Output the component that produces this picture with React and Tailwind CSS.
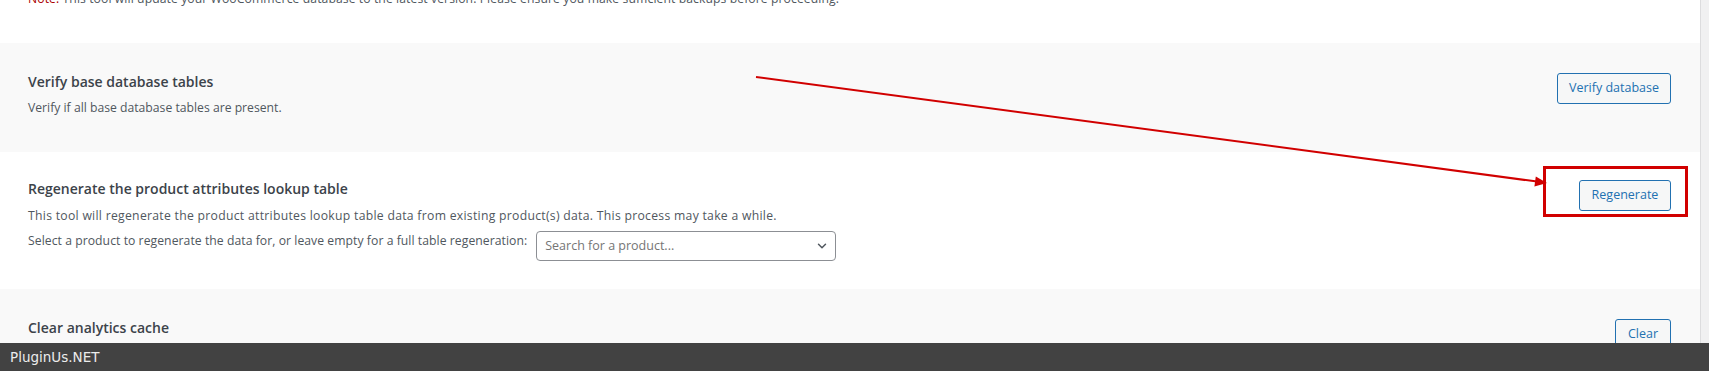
import { ChevronDown } from "lucide-react";

const ToolButton = ({ label, width }) => (
  <button
    type="button"
    className={`${width} h-[31px] shrink-0 rounded-[3px] border border-[#2271b1] bg-[#f6f7f7] text-[12.5px] text-[#2271b1] leading-none`}
  >
    {label}
  </button>
);

const App = () => {
  return (
    <div className="flex h-[371px] w-full flex-col overflow-hidden bg-white font-['Open_Sans',sans-serif]">
      <div className="relative flex min-h-0 flex-1">
        <div className="min-w-0 flex-1 overflow-hidden">
          {/* note line, mostly scrolled out of view */}
          <p className="-mt-[11px] px-[28px] text-[12.2px] leading-5 tracking-[0.08px] text-[#50575e]">
            <span className="text-[#aa0000]">Note:</span> This tool will update
            your WooCommerce database to the latest version. Please ensure you
            make sufficient backups before proceeding.
          </p>

          {/* Verify base database tables */}
          <div className="mt-[34px] flex items-start justify-between bg-[#f9f9f9] pb-[34px] pl-[28px] pr-[29px] pt-[29px]">
            <div>
              <h3 className="text-[14px] font-semibold leading-5 text-[#3c434a]">
                Verify base database tables
              </h3>
              <p className="mt-[6px] text-[12.2px] leading-5 text-[#50575e]">
                Verify if all base database tables are present.
              </p>
            </div>
            <div className="mt-px">
              <ToolButton label="Verify database" width="w-[114px]" />
            </div>
          </div>

          {/* Regenerate lookup table */}
          <div className="flex items-start justify-between bg-white pb-[28px] pl-[28px] pr-[29px] pt-[27px]">
            <div>
              <h3 className="text-[14px] font-semibold leading-5 text-[#3c434a]">
                Regenerate the product attributes lookup table
              </h3>
              <p className="mt-[7px] text-[12.2px] leading-5 tracking-[0.29px] text-[#50575e]">
                This tool will regenerate the product attributes lookup table
                data from existing product(s) data. This process may take a
                while.
              </p>
              <div className="mt-[5px] flex items-start gap-[9px]">
                <span className="text-[12.2px] leading-5 tracking-[0.05px] text-[#50575e]">
                  Select a product to regenerate the data for, or leave empty
                  for a full table regeneration:
                </span>
                <div className="flex h-[30px] w-[300px] items-center justify-between rounded-[4px] border border-[#8c8f94] bg-white pl-[8px] pr-[6px]">
                  <span className="text-[12.5px] text-[#757575]">
                    Search for a product...
                  </span>
                  <ChevronDown size={14} strokeWidth={2.5} className="text-[#50575e]" />
                </div>
              </div>
            </div>
            <div className="mt-px">
              <ToolButton label="Regenerate" width="w-[92px]" />
            </div>
          </div>

          {/* Clear analytics cache */}
          <div className="flex items-start justify-between bg-[#f9f9f9] pb-[34px] pl-[28px] pr-[29px] pt-[29px]">
            <h3 className="text-[14px] font-semibold leading-5 text-[#3c434a]">
              Clear analytics cache
            </h3>
            <div className="mt-px">
              <ToolButton label="Clear" width="w-[56px]" />
            </div>
          </div>
        </div>

        {/* scrollbar track */}
        <div className="w-[9px] shrink-0 border-l border-[#dcdcde] bg-[#f0f0f1]" />

        {/* annotation */}
        <svg
          className="pointer-events-none absolute left-0 top-0"
          width="1709"
          height="343"
        >
          <line x1="756" y1="77" x2="1537" y2="181.6" stroke="#d10000" strokeWidth="2" />
          <polygon points="1547,183 1535.8,176.4 1534.4,186.4" fill="#d10000" />
        </svg>
        <div className="pointer-events-none absolute left-[1543px] top-[166px] h-[51px] w-[145px] border-[3px] border-[#d10000]" />
      </div>

      <div className="flex h-[28px] shrink-0 items-center bg-[#424242] pl-[10px] font-['DejaVu_Sans',sans-serif] text-[13.5px] text-[#ececec]">
        PluginUs.NET
      </div>
    </div>
  );
};

export default App;
